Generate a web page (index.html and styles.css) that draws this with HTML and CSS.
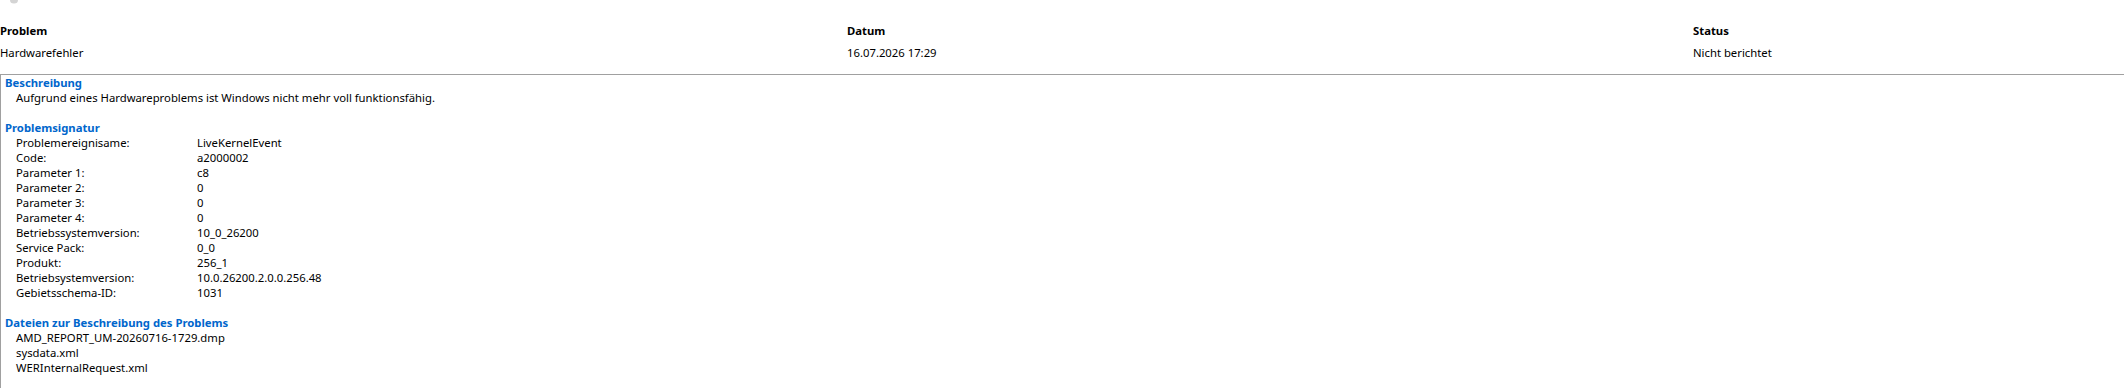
FILE: index.html
```html
<!DOCTYPE html>
<html lang="de">
<head>
    <meta charset="UTF-8">
    <meta name="viewport" content="width=device-width, initial-scale=1.0">
    <title>Problemdetails</title>
    <link rel="stylesheet" href="styles.css">
</head>
<body>
    <div class="top-strip">
        <svg class="top-icon" width="10" height="4" viewBox="0 0 10 4">
            <path d="M1 0 A4 3.5 0 0 0 9 0" fill="#d4d4d4"/>
        </svg>
    </div>

    <div class="summary">
        <div class="summary-col">
            <div class="col-title">Problem</div>
            <div class="col-value">Hardwarefehler</div>
        </div>
        <div class="summary-col">
            <div class="col-title">Datum</div>
            <div class="col-value">16.07.2026 17:29</div>
        </div>
        <div class="summary-col">
            <div class="col-title">Status</div>
            <div class="col-value">Nicht berichtet</div>
        </div>
    </div>

    <div class="details">
        <div class="section">
            <div class="section-title">Beschreibung</div>
            <div class="line">Aufgrund eines Hardwareproblems ist Windows nicht mehr voll funktionsfähig.</div>
        </div>

        <div class="section">
            <div class="section-title">Problemsignatur</div>
            <div class="sig-table">
                <span>Problemereignisame:</span><span>LiveKernelEvent</span>
                <span>Code:</span><span>a2000002</span>
                <span>Parameter 1:</span><span>c8</span>
                <span>Parameter 2:</span><span>0</span>
                <span>Parameter 3:</span><span>0</span>
                <span>Parameter 4:</span><span>0</span>
                <span>Betriebssystemversion:</span><span>10_0_26200</span>
                <span>Service Pack:</span><span>0_0</span>
                <span>Produkt:</span><span>256_1</span>
                <span>Betriebsystemversion:</span><span>10.0.26200.2.0.0.256.48</span>
                <span>Gebietsschema-ID:</span><span>1031</span>
            </div>
        </div>

        <div class="section">
            <div class="section-title">Dateien zur Beschreibung des Problems</div>
            <div class="line">AMD_REPORT_UM-20260716-1729.dmp</div>
            <div class="line">sysdata.xml</div>
            <div class="line">WERInternalRequest.xml</div>
        </div>
    </div>
</body>
</html>
```

FILE: styles.css
```css
body {
    margin: 0;
    font-family: "Noto Sans", "Open Sans", sans-serif;
    font-size: 11.3px;
    line-height: 15px;
    color: #000;
    background: #fff;
}
.top-strip {
    height: 23px;
}
.top-icon {
    display: block;
    margin-left: 9px;
}
.summary {
    display: grid;
    grid-template-columns: 847px 846px 1fr;
    height: 51px;
}
.col-title {
    font-weight: bold;
}
.col-value {
    margin-top: 7px;
}
.details {
    border-top: 1px solid #a0a0a0;
    border-left: 1px solid #a0a0a0;
    padding-left: 4px;
    padding-bottom: 15px;
}
.section {
    margin-bottom: 15px;
}
.section-title {
    color: #0066cc;
    font-weight: bold;
}
.line {
    padding-left: 11px;
}
.sig-table {
    display: grid;
    grid-template-columns: 181px 1fr;
    padding-left: 11px;
}
```
